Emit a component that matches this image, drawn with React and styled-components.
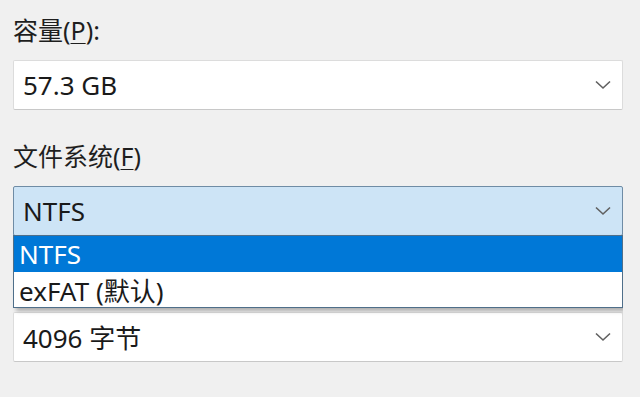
import React from 'react';
import styled, { createGlobalStyle } from 'styled-components';

const GlobalStyle = createGlobalStyle`
  html, body {
    margin: 0;
    padding: 0;
    background: #f0f0f0;
  }
  body {
    font-family: 'Noto Sans', 'Noto Sans CJK SC', sans-serif;
    color: #1a1a1a;
  }
`;

const StyledPage = styled.div`
  width: 623px;
  height: 397px;
  padding: 15px 0 0 13px;
  box-sizing: border-box;
  display: flex;
  flex-direction: column;
  gap: 31px;
  overflow: hidden;
`;

const StyledField = styled.div`
  display: flex;
  flex-direction: column;
  gap: 15px;
`;

const StyledLabel = styled.div`
  height: 30px;
  line-height: 30px;
  font-size: 25px;
  color: #1e1e1e;
  white-space: nowrap;

  u {
    text-decoration-thickness: 1px;
    text-underline-offset: 3px;
  }
`;

const StyledCombo = styled.div`
  position: relative;
  height: 50px;
  box-sizing: border-box;
  display: flex;
  align-items: center;
  justify-content: space-between;
  padding: 0 10px 0 9px;
  font-size: 26px;
  background: ${({ $open }) => ($open ? '#cde4f6' : '#ffffff')};
  border: 1px solid ${({ $open }) => ($open ? '#6f8ca5' : '#dcdcdc')};
  border-bottom-color: ${({ $open }) => ($open ? '#6f8ca5' : '#c8c8c8')};
  border-radius: 2px;
  color: #1a1a1a;

  svg {
    flex: none;
  }
`;

const StyledList = styled.ul`
  position: absolute;
  left: -1px;
  right: -1px;
  top: 100%;
  margin: 0;
  padding: 0;
  list-style: none;
  background: #ffffff;
  border: 1px solid #4f6f8a;
  box-shadow: 3px 3px 4px rgba(0, 0, 0, 0.28);
  z-index: 2;
`;

const StyledOption = styled.li`
  height: ${({ $selected }) => ($selected ? '36px' : '35px')};
  display: flex;
  align-items: center;
  padding-left: 5px;
  font-size: 26px;
  background: ${({ $selected }) => ($selected ? '#0078d7' : '#ffffff')};
  color: ${({ $selected }) => ($selected ? '#ffffff' : '#1a1a1a')};
`;

const Chevron = () => (
  <svg width="18" height="10" viewBox="0 0 18 10">
    <path d="M2 1.5 L9 8 L16 1.5" fill="none" stroke="#606060" strokeWidth="1.6" />
  </svg>
);

const Combo = ({ value, open, options }) => (
  <StyledCombo $open={open}>
    <span>{value}</span>
    <Chevron />
    {open && (
      <StyledList>
        {options.map(opt => (
          <StyledOption key={opt} $selected={opt === value}>
            {opt}
          </StyledOption>
        ))}
      </StyledList>
    )}
  </StyledCombo>
);

const App = () => (
  <>
    <GlobalStyle />
    <StyledPage>
      <StyledField>
        <StyledLabel>
          容量(<u>P</u>):
        </StyledLabel>
        <Combo value="57.3 GB" />
      </StyledField>

      <StyledField>
        <StyledLabel>
          文件系统(<u>F</u>)
        </StyledLabel>
        <Combo value="NTFS" open options={['NTFS', 'exFAT (默认)']} />
      </StyledField>

      <StyledField>
        {/* label sits under the open list in the reference */}
        <StyledLabel />
        <Combo value="4096 字节" />
      </StyledField>
    </StyledPage>
  </>
);

export default App;
